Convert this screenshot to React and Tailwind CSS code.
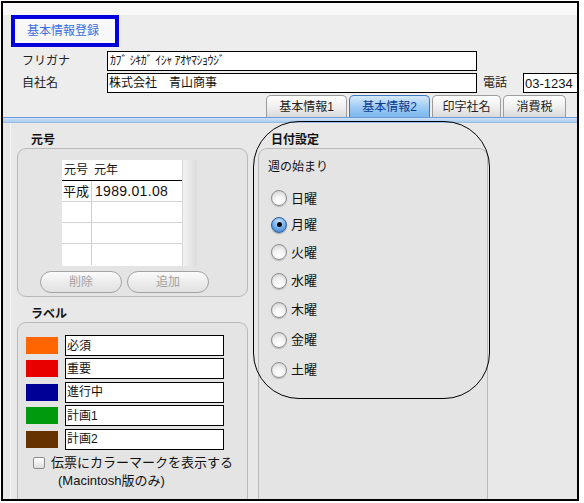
import React from "react";

const FONT = "font-['Liberation_Sans','Noto_Sans_CJK_JP',sans-serif]";

function Tab({ label, active, w }) {
  return (
    <div
      className={
        "shrink-0 h-[22px] rounded-t-[5px] border border-b-0 flex items-center justify-center text-[12px] leading-none " +
        (active
          ? "border-[#3f78c0] bg-[linear-gradient(#d6e9fb,#9ccaf3_55%,#7db7ee)] text-[#0a3a8a]"
          : "border-[#9c9c9c] bg-[linear-gradient(#ffffff,#eeeeee_55%,#dadada)] text-[#222]")
      }
      style={{ width: w }}
    >
      {label}
    </div>
  );
}

function Radio({ label, checked }) {
  return (
    <div className="flex items-center h-full">
      {checked ? (
        <div className="w-[16px] h-[16px] rounded-full border border-[#2f5f9e] bg-[radial-gradient(circle_at_50%_30%,#cfe6fb,#6aa9e6_55%,#3a78c8)] flex items-center justify-center shadow-[0_1px_1px_rgba(0,0,0,0.25)]">
          <div className="w-[5px] h-[5px] rounded-full bg-black" />
        </div>
      ) : (
        <div className="w-[16px] h-[16px] rounded-full border border-[#8d8d8d] bg-[radial-gradient(circle_at_50%_75%,#ffffff,#f2f2f2_45%,#c9c9c9)] shadow-[0_1px_1px_rgba(0,0,0,0.2)]" />
      )}
      <span className="ml-[4px] text-[13px] text-[#111] leading-none">{label}</span>
    </div>
  );
}

function PillButton({ label }) {
  return (
    <div className="w-[82px] h-[22px] rounded-full border border-[#a3a3a3] bg-[linear-gradient(#fbfbfb,#ececec_50%,#e2e2e2)] flex items-center justify-center text-[12px] text-[#a2a2a2] leading-none">
      {label}
    </div>
  );
}

function LabelRow({ color, text }) {
  return (
    <div className="flex items-center h-[21px] mb-[2.4px]">
      <div className="w-[32px] h-[17px] ml-[8px]" style={{ backgroundColor: color }} />
      <div className="ml-[7px] w-[159px] h-[21px] border border-black bg-white flex items-center pl-[1px] text-[12px] text-[#111] leading-none">
        {text}
      </div>
    </div>
  );
}

export default function App() {
  const labels = [
    ["#ff6600", "必須"],
    ["#e80000", "重要"],
    ["#000096", "進行中"],
    ["#009a0e", "計画1"],
    ["#663300", "計画2"],
  ];
  const days = [
    ["日曜", false, 26],
    ["月曜", true, 27],
    ["火曜", false, 28.5],
    ["水曜", false, 28.5],
    ["木曜", false, 29.5],
    ["金曜", false, 30],
    ["土曜", false, 30],
  ];
  return (
    <div className={"relative w-[584px] h-[503px] bg-white overflow-hidden " + FONT}>
      <div className="ml-[1px] mt-[1px] w-[578px] h-[500px] border-2 border-black overflow-hidden flex flex-col bg-[#e8e8e8]">
        {/* header */}
        <div className="h-[114px] shrink-0 bg-[linear-gradient(#f9f9f9_0,#f9f9f9_12px,#ededed_12px)] flex flex-col">
          <div className="ml-[8px] mt-[12px] w-[108px] h-[32px] border-[4px] border-[#0000dd] bg-[#f8f8f8] flex items-center pl-[12px] text-[12px] text-[#3c6fe0] leading-none">
            基本情報登録
          </div>
          <div className="mt-[4px] h-[20px] flex items-center">
            <span className="shrink-0 w-[104px] pl-[19px] text-[12px] text-[#222] leading-none">フリガナ</span>
            <div className="shrink-0 w-[370px] h-[20px] border border-black bg-white flex items-center pl-[2px] text-[12px] tracking-[-0.5px] text-[#111] leading-none">
              ｶﾌﾞ ｼｷｶﾞ ｲｼｬ ｱｵﾔﾏｼｮｳｼﾞ
            </div>
          </div>
          <div className="mt-[2px] h-[20px] flex items-center">
            <span className="shrink-0 w-[104px] pl-[19px] text-[12px] text-[#222] leading-none">自社名</span>
            <div className="shrink-0 w-[370px] h-[20px] border border-black bg-white flex items-center pl-[1px] text-[12px] text-[#111] leading-none">
              株式会社　青山商事
            </div>
            <span className="shrink-0 ml-[6px] w-[40px] text-[12px] text-[#222] leading-none">電話</span>
            <div className="flex-1 min-w-0 h-[20px] border border-black border-r-0 bg-white flex items-center pl-[1px] text-[13px] text-[#111] leading-none whitespace-nowrap">
              03-1234
            </div>
          </div>
          <div className="mt-[2px] h-[22px] flex items-end pl-[263px] gap-[2px]">
            <Tab label="基本情報1" w={81} />
            <Tab label="基本情報2" w={81} active />
            <Tab label="印字社名" w={69} />
            <Tab label="消費税" w={63} />
          </div>
        </div>
        {/* blue band */}
        <div className="h-[6px] shrink-0 border-t border-[#6d9bd8] border-b border-b-[#9bbbe2] bg-[linear-gradient(#cfe3f7,#a9cbef)]" />
        {/* content */}
        <div className="flex-1 flex">
          {/* left panel */}
          <div className="ml-[7px] w-[243px] border-l border-l-[#f4f4f4] flex flex-col">
            <div className="mt-[9px] pl-[20px] h-[16px] flex items-center text-[12px] font-bold text-[#111] leading-none">元号</div>
            <div className="ml-[6px] w-[231px] h-[149px] rounded-[9px] border border-[#b9b9b9] bg-[#e4e4e4] flex flex-col">
              <div className="ml-[44px] mt-[11px] w-[135px] h-[106px] bg-white flex">
                <div className="flex-1 flex flex-col">
                  <div className="h-[21px] flex border-b border-black text-[12px] text-[#111] leading-none">
                    <div className="w-[30px] flex items-center pl-[2px]">元号</div>
                    <div className="flex-1 flex items-center pl-[2px]">元年</div>
                  </div>
                  {[0, 1, 2, 3].map((i) => (
                    <div key={i} className={"h-[21px] flex text-[13px] text-[#111] leading-none " + (i < 3 ? "border-b border-[#d4d4d4]" : "")}>
                      <div className="w-[30px] border-r border-[#cfcfcf] flex items-center pl-[1px]">{i === 0 ? "平成" : ""}</div>
                      <div className="flex-1 flex items-center pl-[3px] text-[14px] tracking-[0.3px]">{i === 0 ? "1989.01.08" : ""}</div>
                    </div>
                  ))}
                </div>
                <div className="w-[15px] bg-[linear-gradient(90deg,#f2f2f2,#dcdcdc)] border-l border-[#d8d8d8]" />
              </div>
              <div className="mt-[5px] ml-[22px] flex gap-[5px]">
                <PillButton label="削除" />
                <PillButton label="追加" />
              </div>
            </div>
            <div className="mt-[9px] pl-[20px] h-[16px] flex items-center text-[12px] font-bold text-[#111] leading-none">ラベル</div>
            <div className="ml-[6px] w-[231px] flex-1 rounded-t-[9px] border border-b-0 border-[#b9b9b9] bg-[#e4e4e4] flex flex-col pt-[12px]">
              {labels.map(([c, t]) => (
                <LabelRow key={t} color={c} text={t} />
              ))}
              <div className="mt-[4px] ml-[15px] flex items-center h-[14px]">
                <div className="w-[12px] h-[12px] rounded-[2px] border border-[#8b8b8b] bg-[linear-gradient(#ffffff,#dedede)]" />
                <span className="ml-[6px] text-[13px] text-[#111] leading-none">伝票にカラーマークを表示する</span>
              </div>
              <div className="mt-[3px] ml-[40px] text-[13px] text-[#111] leading-[16px]">(Macintosh版のみ)</div>
            </div>
          </div>
          {/* middle panel */}
          <div className="ml-[5px] w-[230px] flex flex-col">
            <div className="mt-[9px] pl-[13px] h-[16px] flex items-center text-[12px] font-bold text-[#111] leading-none">日付設定</div>
            <div className="flex-1 rounded-t-[9px] border border-b-0 border-[#b9b9b9] bg-[#e4e4e4] flex flex-col">
              <div className="mt-[10px] pl-[9px] h-[16px] flex items-center text-[12px] text-[#111] leading-none">週の始まり</div>
              <div className="mt-[10px] pl-[12px] flex flex-col">
                {days.map(([d, c, h]) => (
                  <div key={d} style={{ height: h }}>
                    <Radio label={d} checked={c} />
                  </div>
                ))}
              </div>
            </div>
          </div>
        </div>
      </div>
      {/* annotation outline */}
      <div className="absolute left-[253px] top-[121px] w-[237px] h-[278px] rounded-[46px] border border-black pointer-events-none" />
    </div>
  );
}
